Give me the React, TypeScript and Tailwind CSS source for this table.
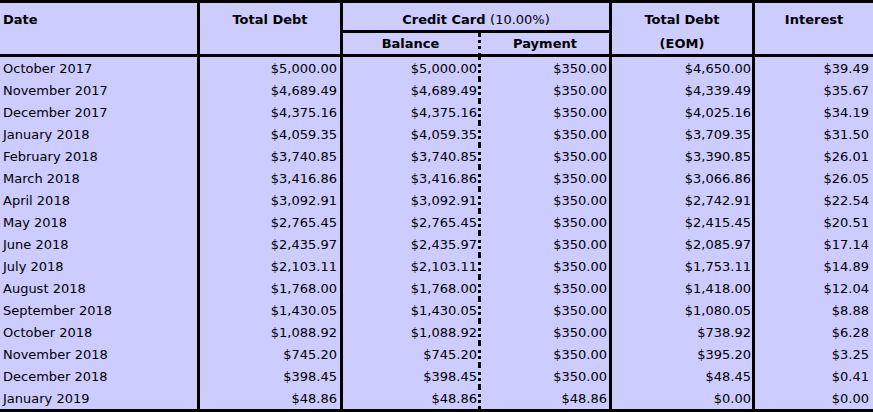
const rows: string[][] = [
  ["October 2017", "$5,000.00", "$5,000.00", "$350.00", "$4,650.00", "$39.49"],
  ["November 2017", "$4,689.49", "$4,689.49", "$350.00", "$4,339.49", "$35.67"],
  ["December 2017", "$4,375.16", "$4,375.16", "$350.00", "$4,025.16", "$34.19"],
  ["January 2018", "$4,059.35", "$4,059.35", "$350.00", "$3,709.35", "$31.50"],
  ["February 2018", "$3,740.85", "$3,740.85", "$350.00", "$3,390.85", "$26.01"],
  ["March 2018", "$3,416.86", "$3,416.86", "$350.00", "$3,066.86", "$26.05"],
  ["April 2018", "$3,092.91", "$3,092.91", "$350.00", "$2,742.91", "$22.54"],
  ["May 2018", "$2,765.45", "$2,765.45", "$350.00", "$2,415.45", "$20.51"],
  ["June 2018", "$2,435.97", "$2,435.97", "$350.00", "$2,085.97", "$17.14"],
  ["July 2018", "$2,103.11", "$2,103.11", "$350.00", "$1,753.11", "$14.89"],
  ["August 2018", "$1,768.00", "$1,768.00", "$350.00", "$1,418.00", "$12.04"],
  ["September 2018", "$1,430.05", "$1,430.05", "$350.00", "$1,080.05", "$8.88"],
  ["October 2018", "$1,088.92", "$1,088.92", "$350.00", "$738.92", "$6.28"],
  ["November 2018", "$745.20", "$745.20", "$350.00", "$395.20", "$3.25"],
  ["December 2018", "$398.45", "$398.45", "$350.00", "$48.45", "$0.41"],
  ["January 2019", "$48.86", "$48.86", "$48.86", "$0.00", "$0.00"],
];

export default function App() {
  return (
    <div className="w-[873px] h-[412px] overflow-hidden bg-[#ccccff] font-['DejaVu_Sans',Verdana,sans-serif] text-[13px] text-black">
      <div className="border-t-[3px] border-b-[3px] border-black">
        <table className="table-fixed border-separate border-spacing-0 w-[873px]">
          <colgroup>
            <col className="w-[200px]" />
            <col className="w-[143px]" />
            <col className="w-[138px]" />
            <col className="w-[131px]" />
            <col className="w-[143px]" />
            <col className="w-[118px]" />
          </colgroup>
          <thead>
            <tr className="h-[30px]">
              <th rowSpan={2} className="p-0 pl-[3px] pt-[9px] align-top text-left font-bold leading-4 border-r-[3px] border-b-[3px] border-black">
                Date
              </th>
              <th rowSpan={2} className="p-0 pt-[9px] align-top text-center font-bold leading-4 border-r-[3px] border-b-[3px] border-black">
                Total Debt
              </th>
              <th colSpan={2} className="p-0 pt-[9px] align-top text-center leading-4 border-r-[3px] border-b-[3px] border-black">
                <span className="font-bold">Credit Card</span> <span className="font-normal">(10.00%)</span>
              </th>
              <th rowSpan={2} className="p-0 pt-[9px] align-top text-center font-bold leading-4 border-r-[3px] border-b-[3px] border-black">
                <div>Total Debt</div>
                <div className="mt-[8px]">(EOM)</div>
              </th>
              <th rowSpan={2} className="p-0 pt-[9px] align-top text-center font-bold leading-4 border-b-[3px] border-black">
                Interest
              </th>
            </tr>
            <tr className="h-[24px]">
              <th className="p-0 pt-[3px] align-top text-center font-bold leading-4 border-r-[3px] border-b-[3px] border-black [border-right-style:dotted]">
                Balance
              </th>
              <th className="p-0 pt-[3px] align-top text-center font-bold leading-4 border-r-[3px] border-b-[3px] border-black">
                Payment
              </th>
            </tr>
          </thead>
          <tbody>
            {rows.map((r) => (
              <tr key={r[0]} className="h-[22px]">
                <td className="p-0 pl-[3px] pt-[2px] text-left leading-[20px] whitespace-nowrap border-r-[3px] border-black">{r[0]}</td>
                <td className="p-0 pr-[3px] pt-[2px] text-right leading-[20px] border-r-[3px] border-black">{r[1]}</td>
                <td className="p-0 pr-[1px] pt-[2px] text-right leading-[20px] border-r-[3px] border-black [border-right-style:dotted]">{r[2]}</td>
                <td className="p-0 pr-[2px] pt-[2px] text-right leading-[20px] border-r-[3px] border-black">{r[3]}</td>
                <td className="p-0 pr-[1px] pt-[2px] text-right leading-[20px] border-r-[3px] border-black">{r[4]}</td>
                <td className="p-0 pr-[4px] pt-[2px] text-right leading-[20px]">{r[5]}</td>
              </tr>
            ))}
          </tbody>
        </table>
      </div>
    </div>
  );
}
